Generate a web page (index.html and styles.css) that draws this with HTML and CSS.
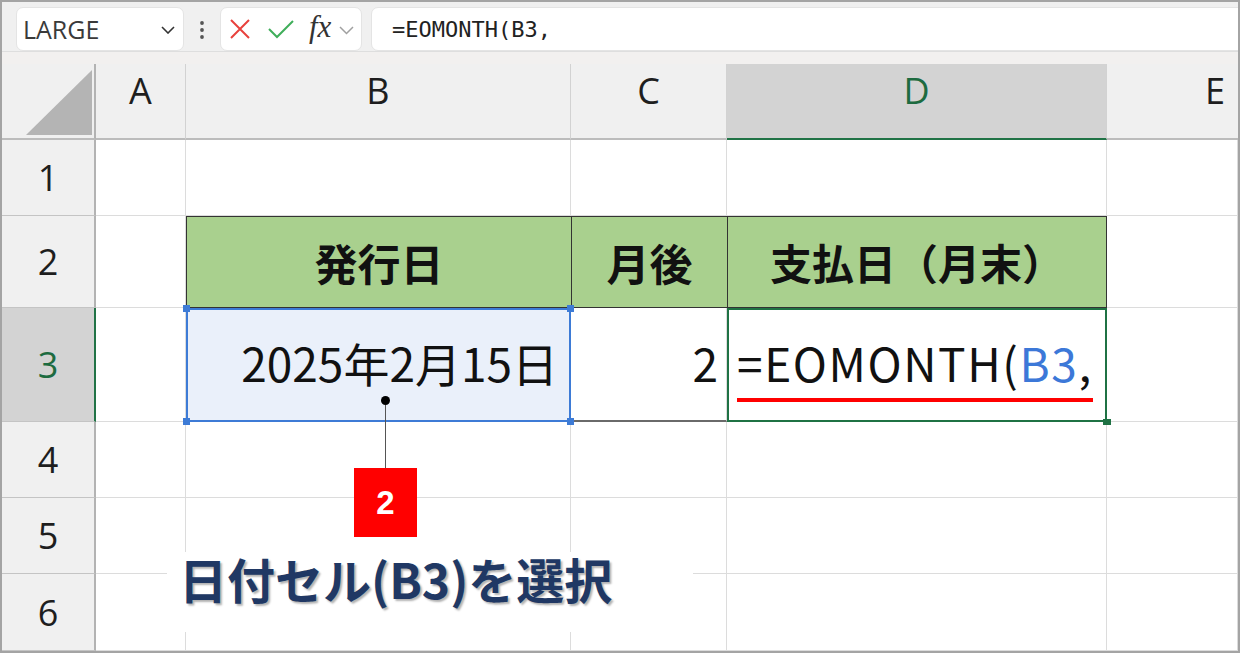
FILE: index.html
```html
<!DOCTYPE html>
<html>
<head>
    <meta charset="utf-8">
    <link rel="stylesheet" href="styles.css">
    <title>EOMONTH</title>
</head>
<body>
<div class="frame">
    <div class="toolbar">
        <div class="namebox">
            <span>LARGE</span>
            <svg class="chev" width="14" height="8" viewBox="0 0 14 8"><polyline points="1,1 7,7 13,1" fill="none" stroke="#333" stroke-width="1.6"/></svg>
        </div>
        <svg class="dots" width="12" height="20" viewBox="0 0 12 20"><circle cx="6" cy="3" r="1.9" fill="#555"/><circle cx="6" cy="10" r="1.9" fill="#555"/><circle cx="6" cy="17" r="1.9" fill="#555"/></svg>
        <div class="fbtns">
            <svg width="22" height="22" viewBox="0 0 22 22"><path d="M2 2 L20 20 M20 2 L2 20" stroke="#e8413c" stroke-width="2" fill="none"/></svg>
            <svg width="28" height="20" viewBox="0 0 28 20"><polyline points="2,10 10,18 26,2" stroke="#3fae5a" stroke-width="2" fill="none"/></svg>
            <span class="fx">fx</span>
            <svg width="15" height="9" viewBox="0 0 15 9"><polyline points="1,1 7.5,7.5 14,1" fill="none" stroke="#a0a0a0" stroke-width="1.5"/></svg>
        </div>
        <div class="formula">=EOMONTH(B3,</div>
    </div>
    <div class="band"></div>

    <div class="sheet">
        <div class="corner">
            <svg width="92" height="74" viewBox="0 0 92 74"><polygon points="24,71 90,71 90,6" fill="#b4b4b4"/></svg>
        </div>
        <div class="colhead">A</div>
        <div class="colhead">B</div>
        <div class="colhead">C</div>
        <div class="colhead active">D</div>
        <div class="colhead e">E</div>

        <div class="rowhead">1</div>
        <div class="cell"></div><div class="cell"></div><div class="cell"></div><div class="cell"></div><div class="cell"></div>

        <div class="rowhead">2</div>
        <div class="cell"></div>
        <div class="cell green">発行日</div>
        <div class="cell green">月後</div>
        <div class="cell green last">支払日（月末）</div>
        <div class="cell"></div>

        <div class="rowhead active">3</div>
        <div class="cell"></div>
        <div class="cell sel">
            2025年2月15日
            <i class="h tl"></i><i class="h tr"></i><i class="h bl"></i><i class="h br"></i>
        </div>
        <div class="cell num">2</div>
        <div class="cell current">
            <span class="typed">=EOMONTH(<span class="ref">B3</span>,</span>
            <i class="fill"></i>
        </div>
        <div class="cell"></div>

        <div class="rowhead">4</div>
        <div class="cell"></div><div class="cell"></div><div class="cell"></div><div class="cell"></div><div class="cell"></div>

        <div class="rowhead">5</div>
        <div class="cell"></div><div class="cell"></div><div class="cell"></div><div class="cell"></div><div class="cell"></div>

        <div class="rowhead">6</div>
        <div class="cell"></div><div class="cell"></div><div class="cell"></div><div class="cell"></div><div class="cell"></div>
    </div>

    <!-- callout -->
    <div class="callout">
        <div class="dot"></div>
        <div class="leader"></div>
        <div class="badge">2</div>
    </div>
    <div class="note">日付セル(B3)を選択</div>
</div>
</body>
</html>
```

FILE: styles.css
```css
body{
    margin: 0;
    background: #fff;
}

.frame{
    position: relative;
    width: 1240px;
    height: 653px;
    box-sizing: border-box;
    border: 2px solid #a4a4a4;
    overflow: hidden;
    background: #f0f0f0;
    font-family: "Noto Sans CJK JP", "Noto Sans", sans-serif;
}

/* formula bar */
.toolbar{
    display: flex;
    align-items: flex-start;
    height: 50px;
    box-sizing: border-box;
    padding: 5px 0 0 14px;
    border-bottom: 1px solid #dedede;
}
.namebox{
    width: 168px;
    height: 44px;
    box-sizing: border-box;
    background: #fff;
    border: 1px solid #e4e4e4;
    border-radius: 7px;
    display: flex;
    align-items: center;
    justify-content: space-between;
    padding: 0 8px 0 6px;
    font-family: "Open Sans", sans-serif;
    font-size: 25px;
    color: #3a3a3a;
}
.namebox .chev{
    margin-top: 2px;
}
.dots{
    margin: 13px 12px 0 12px;
}
.fbtns{
    width: 142px;
    height: 44px;
    box-sizing: border-box;
    background: #fff;
    border: 1px solid #e4e4e4;
    border-radius: 7px;
    display: flex;
    align-items: center;
    padding-left: 8px;
}
.fbtns svg:nth-child(2){
    margin-left: 16px;
}
.fx{
    font-family: "Liberation Serif", serif;
    font-style: italic;
    font-size: 31px;
    color: #333;
    margin-left: 14px;
    margin-top: -5px;
}
.fbtns svg:last-child{
    margin-left: 8px;
    margin-top: 3px;
}
.formula{
    flex: 1;
    height: 44px;
    box-sizing: border-box;
    margin: 0 -20px 0 9px;
    background: #fff;
    border: 1px solid #e4e4e4;
    border-radius: 7px;
    padding-left: 20px;
    display: flex;
    align-items: center;
    font-family: "DejaVu Sans Mono", monospace;
    font-size: 22px;
    color: #222;
}
.band{
    height: 12px;
    background: #f2f0ef;
}

/* grid */
.sheet{
    display: grid;
    grid-template-columns: 94px 90px 385px 156px 380px 1fr;
    grid-template-rows: 76px 76px 92px 114px 76px 76px 1fr;
    background: #fff;
    height: 587px;
}
.corner{
    background: #f0f0f0;
    border-right: 2px solid #b3b3b3;
    border-bottom: 2px solid #bcbcbc;
}
.corner svg{
    display: block;
}
.colhead{
    background: #f0f0f0;
    border-right: 1px solid #d2d2d2;
    border-bottom: 2px solid #bcbcbc;
    display: flex;
    align-items: center;
    justify-content: center;
    padding-bottom: 22px;
    font-family: "Open Sans", sans-serif;
    font-size: 36px;
    color: #1e1e1e;
}
.colhead.active{
    background: #d3d3d3;
    color: #1d6b40;
    border-bottom-color: #217346;
}
.colhead.e{
    justify-content: flex-start;
    padding-left: 98px;
    border-right: none;
}
.rowhead{
    background: #f0f0f0;
    border-right: 2px solid #b3b3b3;
    border-bottom: 1px solid #c4c4c4;
    display: flex;
    align-items: center;
    justify-content: center;
    font-family: "Open Sans", sans-serif;
    font-size: 36px;
    color: #1e1e1e;
}
.rowhead.active{
    background: #d3d3d3;
    color: #1d6b40;
    border-right-color: #217346;
}
.cell{
    border-right: 1px solid #dcdcdc;
    border-bottom: 1px solid #dcdcdc;
    display: flex;
    align-items: center;
    font-size: 46px;
    line-height: 46px;
    color: #111;
}

.green{
    background: #a9d08e;
    border-top: 1px solid #333;
    border-left: 1px solid #333;
    border-bottom: 1px solid #333;
    border-right: none;
    justify-content: center;
    font-weight: 700;
    font-size: 43px;
}
.green.last{
    border-right: 1px solid #333;
    font-size: 42px;
}

.sel{
    position: relative;
    background: #eaf0fa;
    border: 2px solid #3d7bd6;
    justify-content: flex-end;
    align-items: flex-start;
    padding: 29px 11px 0 0;
}
.h{
    position: absolute;
    width: 7px;
    height: 7px;
    background: #3d7bd6;
}
.h.tl{ left: -5px; top: -5px; }
.h.tr{ right: -5px; top: -5px; }
.h.bl{ left: -5px; bottom: -5px; }
.h.br{ right: -5px; bottom: -5px; }

.num{
    justify-content: flex-end;
    align-items: flex-start;
    padding: 31px 8px 0 0;
    border-bottom: 2px solid #6a6a6a;
}
.current{
    position: relative;
    border: 2px solid #1f7244;
    align-items: flex-start;
    padding: 29px 0 0 8px;
}
.typed{
    display: inline-block;
    line-height: 46px;
    padding-bottom: 13px;
    border-bottom: 4px solid #ff0000;
    white-space: nowrap;
    letter-spacing: 1.6px;
}
.ref{
    color: #3c78d8;
}
.fill{
    position: absolute;
    right: -6px;
    bottom: -5px;
    width: 8px;
    height: 6px;
    background: #1f7244;
}

/* annotations */
.callout{
    position: absolute;
    left: 352px;
    top: 394px;
    width: 63px;
    display: flex;
    flex-direction: column;
    align-items: center;
}
.dot{
    width: 9px;
    height: 9px;
    border-radius: 50%;
    background: #000;
}
.leader{
    width: 1px;
    height: 63px;
    background: #555;
}
.badge{
    width: 63px;
    height: 69px;
    background: #ff0000;
    color: #fff;
    display: flex;
    align-items: center;
    justify-content: center;
    font-family: "Liberation Sans", sans-serif;
    font-weight: 700;
    font-size: 33px;
}
.note{
    position: absolute;
    left: 165px;
    top: 550px;
    width: 526px;
    height: 80px;
    box-sizing: border-box;
    background: #fff;
    padding: 2px 0 0 12px;
    font-weight: 700;
    font-size: 48px;
    line-height: 48px;
    color: #203864;
    text-shadow: 2px 2px 2px rgba(0, 0, 0, 0.3);
    white-space: nowrap;
}
```
